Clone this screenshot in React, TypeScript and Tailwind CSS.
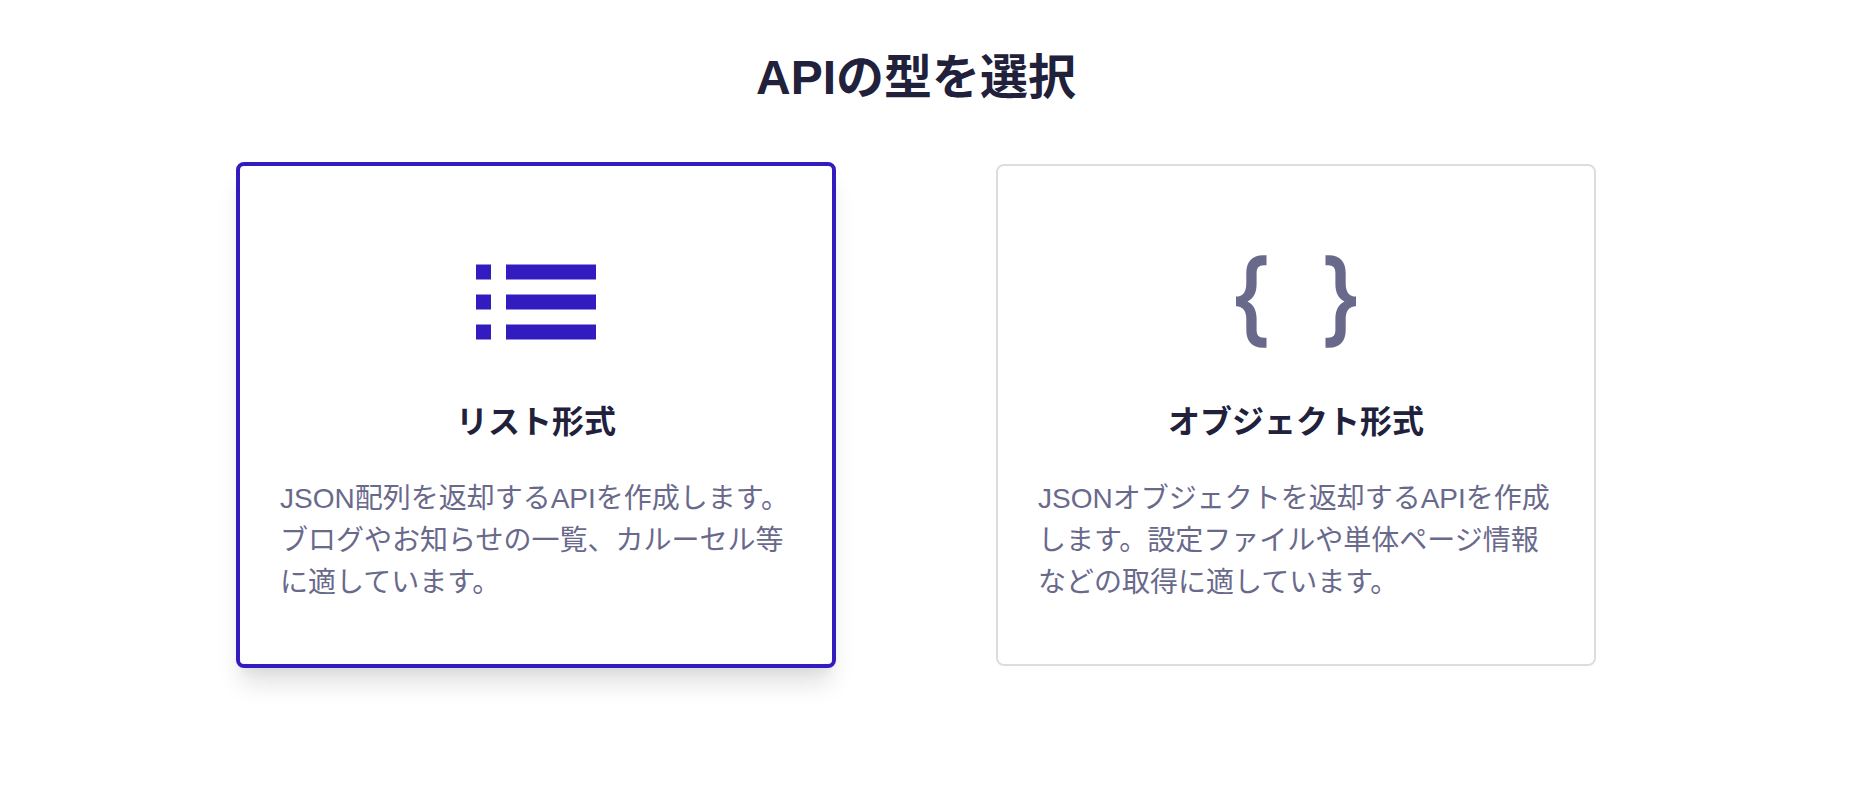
import { FC, ReactNode, useState } from 'react';

type ApiType = 'list' | 'object';

interface ApiTypeCardProps {
  title: string;
  description: string;
  icon: ReactNode;
  selected: boolean;
  onSelect: () => void;
}

const ListIcon: FC = () => (
  <svg width="120" height="120" viewBox="0 0 120 120" fill="currentColor" aria-hidden="true">
    <path d="M0 22.5h15v15H0zM30 22.5h90v15H30zM0 52.5h15v15H0zM30 52.5h90v15H30zM0 82.5h15v15H0zM30 82.5h90v15H30z" />
  </svg>
);

const ObjectIcon: FC = () => {
  // Left brace, mirrored for the right one
  const brace =
    'M30.5 13.3H27C16 13.3 10.3 20 10.3 31V41C10.3 50 7 54.6 0 54.6V64.2C7 64.2 10.3 69 10.3 77V88C10.3 99 16 105.7 27 105.7H30.5V95.7H28C22.5 95.7 20.6 93 20.6 87.5V77C20.6 68 17.5 62.5 11.5 59.4C17.5 56.5 20.6 51 20.6 42V31.5C20.6 26 22.5 23.3 28 23.3H30.5Z';

  return (
    <svg width="120" height="120" viewBox="0 0 120 120" fill="currentColor" aria-hidden="true">
      <path d={brace} />
      <path d={brace} transform="translate(120 0) scale(-1 1)" />
    </svg>
  );
};

const ApiTypeCard: FC<ApiTypeCardProps> = ({ title, description, icon, selected, onSelect }) => (
  <button
    type="button"
    aria-pressed={selected}
    onClick={onSelect}
    className={`flex w-full cursor-pointer flex-col items-center rounded-lg bg-white px-10 pt-[76px] pb-15 ${
      selected
        ? 'border-4 border-[#331cbf] text-[#331cbf] shadow-[0_20px_25px_-5px_rgba(0,0,0,0.12),0_10px_10px_-5px_rgba(0,0,0,0.04)]'
        : 'border-2 border-[#dddddd] text-[#69698c]'
    }`}
  >
    {icon}
    <span className="mt-9 text-[32px] leading-[48px] font-bold text-[#21213b]">{title}</span>
    <span className="mt-8 w-full text-left text-[28px] leading-[42px] text-[#69698c]">
      {description}
    </span>
  </button>
);

export default function App() {
  const [apiType, setApiType] = useState<ApiType>('list');

  return (
    <main
      lang="ja"
      className="min-h-screen bg-white pt-[42px] pr-6 pb-10 font-['Liberation_Sans','Noto_Sans_CJK_JP',sans-serif]"
    >
      <h1 className="text-center text-[48px] leading-[72px] font-bold text-[#21213b]">
        APIの型を選択
      </h1>
      <div className="mx-auto mt-12 grid max-w-[1360px] grid-cols-2 items-center gap-40">
        <ApiTypeCard
          title="リスト形式"
          description="JSON配列を返却するAPIを作成します。ブログやお知らせの一覧、カルーセル等に適しています。"
          icon={<ListIcon />}
          selected={apiType === 'list'}
          onSelect={() => setApiType('list')}
        />
        <ApiTypeCard
          title="オブジェクト形式"
          description="JSONオブジェクトを返却するAPIを作成します。設定ファイルや単体ページ情報などの取得に適しています。"
          icon={<ObjectIcon />}
          selected={apiType === 'object'}
          onSelect={() => setApiType('object')}
        />
      </div>
    </main>
  );
}
